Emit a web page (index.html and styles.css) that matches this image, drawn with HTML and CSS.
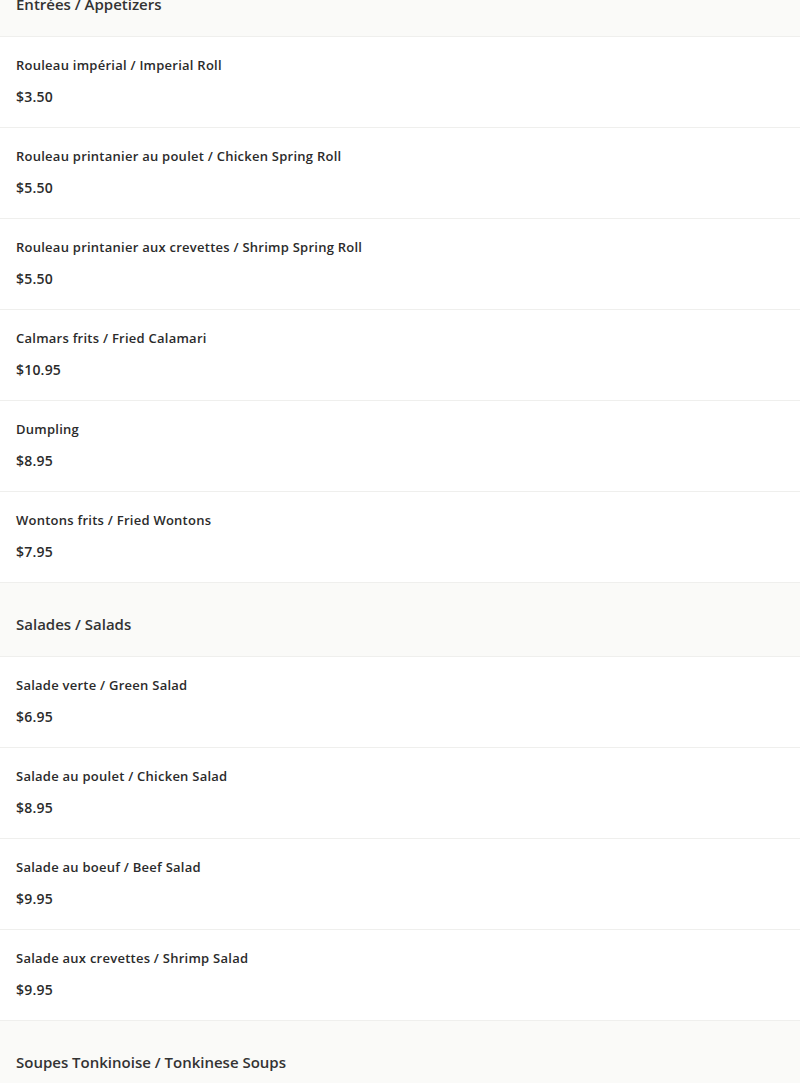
FILE: index.html
```html
<!DOCTYPE html>
<html lang="fr">
<head>
    <meta charset="UTF-8">
    <meta name="viewport" content="width=device-width, initial-scale=1.0">
    <title>Menu</title>
    <link rel="stylesheet" href="styles.css">
</head>
<body>
    <div class="menu">
        <div class="section-header">
            <h2>Entrées / Appetizers</h2>
        </div>
        <div class="item">
            <div class="item-name">Rouleau impérial / Imperial Roll</div>
            <div class="item-price">$3.50</div>
        </div>
        <div class="item">
            <div class="item-name">Rouleau printanier au poulet / Chicken Spring Roll</div>
            <div class="item-price">$5.50</div>
        </div>
        <div class="item">
            <div class="item-name">Rouleau printanier aux crevettes / Shrimp Spring Roll</div>
            <div class="item-price">$5.50</div>
        </div>
        <div class="item">
            <div class="item-name">Calmars frits / Fried Calamari</div>
            <div class="item-price">$10.95</div>
        </div>
        <div class="item">
            <div class="item-name">Dumpling</div>
            <div class="item-price">$8.95</div>
        </div>
        <div class="item">
            <div class="item-name">Wontons frits / Fried Wontons</div>
            <div class="item-price">$7.95</div>
        </div>

        <div class="section-header">
            <h2>Salades / Salads</h2>
        </div>
        <div class="item">
            <div class="item-name">Salade verte / Green Salad</div>
            <div class="item-price">$6.95</div>
        </div>
        <div class="item">
            <div class="item-name">Salade au poulet / Chicken Salad</div>
            <div class="item-price">$8.95</div>
        </div>
        <div class="item">
            <div class="item-name">Salade au boeuf / Beef Salad</div>
            <div class="item-price">$9.95</div>
        </div>
        <div class="item">
            <div class="item-name">Salade aux crevettes / Shrimp Salad</div>
            <div class="item-price">$9.95</div>
        </div>

        <div class="section-header">
            <h2>Soupes Tonkinoise / Tonkinese Soups</h2>
        </div>
    </div>
</body>
</html>
```

FILE: styles.css
```css
* {
    margin: 0;
    padding: 0;
    box-sizing: border-box;
}

body {
    background-color: #fff;
    color: #2b2b2b;
    font-family: "Open Sans", "Noto Sans", sans-serif;
}

.menu {
    margin-top: -37px;
}

.section-header {
    background-color: #fafaf8;
    padding: 29px 16px 20px;
    border-bottom: 1px solid #efefed;
}

.section-header h2 {
    font-size: 15px;
    font-weight: 600;
    line-height: 24px;
    color: #333;
}

.item {
    padding: 18px 16px 20px;
    border-bottom: 1px solid #efefed;
}

.item-name {
    font-size: 13px;
    font-weight: 600;
    line-height: 20px;
    letter-spacing: 0.25px;
}

.item-price {
    font-size: 14px;
    font-weight: 600;
    line-height: 20px;
    letter-spacing: 0.2px;
    margin-top: 12px;
}
```
